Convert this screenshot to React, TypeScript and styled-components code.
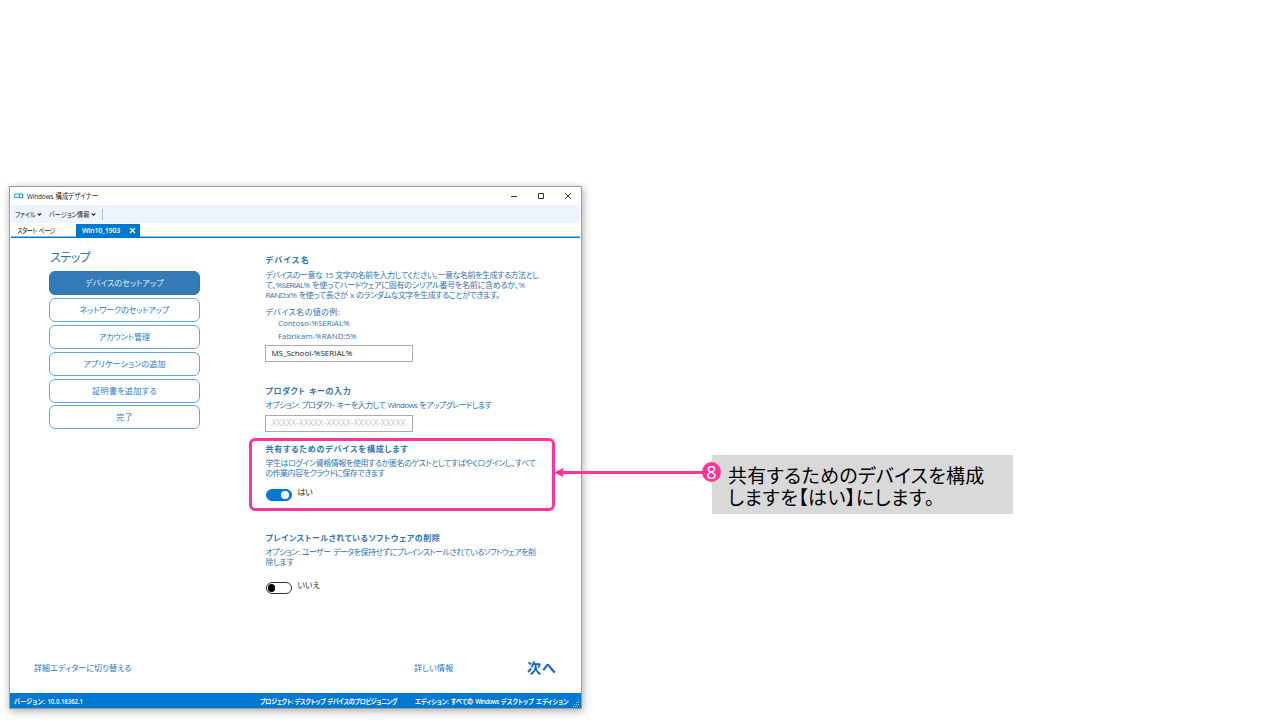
import React from 'react';
import styled, { createGlobalStyle, css } from 'styled-components';

const blue = '#2f74b5';
const pink = '#ff3399';

const GlobalStyle = createGlobalStyle`
  body { margin: 0; background: #fff; }
  * { box-sizing: border-box; }
`;

const Page = styled.main`
  position: relative;
  display: flex;
  align-items: flex-start;
  width: 1280px;
  height: 720px;
  overflow: hidden;
  font-family: 'Open Sans', 'Noto Sans CJK JP', sans-serif;
  font-feature-settings: 'palt';
`;

const Window = styled.section`
  display: flex;
  flex-direction: column;
  width: 573px;
  height: 523px;
  margin: 186px 0 0 9px;
  border: 1px solid #9b9d9e;
  background: #fff;
  box-shadow: 1px 2px 8px rgba(0, 0, 0, 0.34);
`;

const Text = styled.div<{ $w?: number; $size?: number; $h?: number; $mt?: number; $ml?: number; $track?: number; $bold?: boolean; $color?: string }>`
  flex: none;
  width: ${p => (p.$w ? `${p.$w}px` : 'auto')};
  height: ${p => p.$h ?? 10}px;
  margin-top: ${p => p.$mt ?? 0}px;
  margin-left: ${p => p.$ml ?? 0}px;
  font-size: ${p => p.$size ?? 8}px;
  line-height: ${p => p.$h ?? 10}px;
  letter-spacing: ${p => p.$track ?? -0.3}px;
  word-spacing: 0.8px;
  font-weight: ${p => (p.$bold ? 600 : 400)};
  color: ${p => p.$color ?? 'inherit'};
  white-space: nowrap;
  ${p => p.$w && css`text-align: justify; text-align-last: justify;`}
`;

const condense = 0.84;

const CondensedText = styled(Text)<{ $w: number }>`
  width: ${p => p.$w / condense}px;
  margin-right: ${p => p.$w - p.$w / condense}px;
  transform: scaleX(${condense});
  transform-origin: left center;
`;

const TitleBar = styled.header`
  display: flex;
  align-items: center;
  height: 18px;
  padding: 0 0 1px 4px;
  color: #222;
`;

const Controls = styled.div`
  display: flex;
  gap: 19px;
  margin-left: auto;
  padding-right: 9px;
  svg { display: block; }
`;

const MenuBar = styled.nav`
  display: flex;
  align-items: center;
  height: 18px;
  margin: 0 1px;
  padding-left: 4px;
  background: #edf4fe;
  color: #222;
`;

const Divider = styled.span`
  width: 1px;
  height: 11px;
  margin-left: 6px;
  background: #b7bcc4;
`;

const Tabs = styled.div`
  display: flex;
  align-items: flex-end;
  height: 15px;
  margin: 0 1px;
  padding-left: 6px;
  border-bottom: 1px solid #0078d0;
  box-shadow: 0 -1px 0 #7fbce8 inset;
  color: #222;
`;

const ActiveTab = styled.div`
  display: flex;
  align-items: center;
  justify-content: space-between;
  width: 64px;
  height: 13px;
  margin-left: 21px;
  padding: 0 4px 0 6px;
  background: #0078cf;
  color: #fff;
`;

const Body = styled.div`
  display: flex;
  flex: 1;
  color: ${blue};
`;

const Steps = styled.aside`
  display: flex;
  flex-direction: column;
  width: 151.4px;
  margin-left: 39px;
`;

const StepList = styled.div`
  display: flex;
  flex-direction: column;
  gap: 2.8px;
  margin-top: 5.4px;
`;

const Step = styled.div<{ $active?: boolean }>`
  display: flex;
  align-items: center;
  justify-content: center;
  height: 24px;
  padding-right: 1px;
  border: 1px solid ${p => (p.$active ? blue : '#64a3e4')};
  border-radius: 6px;
  background: ${p => (p.$active ? '#337ab7' : '#fff')};
  color: ${p => (p.$active ? '#e2effa' : '#207bd7')};
`;

const Form = styled.div`
  display: flex;
  flex-direction: column;
  width: 280px;
  margin-left: 65px;
`;

const Field = styled.div<{ $mt: number }>`
  display: flex;
  align-items: center;
  width: 147.5px;
  height: 17px;
  margin-top: ${p => p.$mt}px;
  padding: 0 0 1px 5px;
  border: 1px solid #aaa;
`;

const ToggleRow = styled.div<{ $mt: number }>`
  display: flex;
  align-items: flex-start;
  gap: 5.5px;
  height: 15px;
  margin-top: ${p => p.$mt}px;
`;

const Toggle = styled.span<{ $on?: boolean }>`
  display: flex;
  align-items: center;
  justify-content: ${p => (p.$on ? 'flex-end' : 'flex-start')};
  width: 26px;
  height: 12px;
  margin-top: 2px;
  margin-left: 0.6px;
  padding: 0 ${p => (p.$on ? 2 : 1)}px;
  border: 1px solid ${p => (p.$on ? '#0078d7' : '#333')};
  border-radius: 6px;
  background: ${p => (p.$on ? '#0078d7' : '#fff')};
  &::after {
    content: '';
    width: 7.5px;
    height: 7.5px;
    border-radius: 50%;
    background: ${p => (p.$on ? '#fff' : '#000')};
  }
`;

const Links = styled.footer`
  display: flex;
  align-items: center;
  height: 20px;
  margin-bottom: 15px;
  padding-left: 24px;
  color: #1a75d2;
`;

const StatusBar = styled.footer`
  display: flex;
  align-items: center;
  height: 15px;
  padding-left: 4px;
  background: #0078cf;
  color: #fff;
`;

const Grip = styled.svg`
  align-self: flex-end;
  margin: 0 1px 1px auto;
`;

const Callout = styled.aside`
  width: 301px;
  height: 59px;
  margin: 455px 0 0 130px;
  padding: 10px 0 0 16px;
  background: #d9d9d9;
  color: #000;
`;

const Highlight = styled.div`
  position: absolute;
  left: 249px;
  top: 438px;
  width: 306px;
  height: 73px;
  border: 3px solid ${pink};
  border-radius: 6px;
`;

const Arrow = styled.svg`
  position: absolute;
  left: 554px;
  top: 466px;
`;

const Badge = styled.div`
  position: absolute;
  left: 702px;
  top: 462px;
  width: 19px;
  height: 20px;
  border-radius: 50%;
  background: ${pink};
  color: #fff;
  font-size: 18px;
  line-height: 20px;
  text-align: center;
`;

const ChevronIcon = styled.svg`
  flex: none;
  margin-left: 2px;
`;

const Chevron = () => (
  <ChevronIcon width="5" height="5" viewBox="0 0 5 5">
    <path d="M.7 1.4 2.5 3.2 4.3 1.4" fill="none" stroke="#222" strokeWidth="1.1" />
  </ChevronIcon>
);

const steps: [string, number][] = [
  ['デバイスのセットアップ', 78],
  ['ネットワークのセットアップ', 89],
  ['アカウント管理', 51],
  ['アプリケーションの追加', 82],
  ['証明書を追加する', 64],
  ['完了', 16],
];

export default function App() {
  return (
    <Page>
      <GlobalStyle />
      <Window>
        <TitleBar>
          <svg width="10" height="8" viewBox="0 0 10 8" fill="none" stroke="#2697d8" strokeWidth="1">
            <path d="M4.5 5.5H.7V2h4" />
            <circle cx="6.9" cy="3.8" r="1.9" strokeWidth="1.3" />
          </svg>
          <CondensedText $w={71} $size={7.6} $ml={3} $track={-0.15}>Windows 構成デザイナー</CondensedText>
          <Controls>
            <svg width="8" height="8" viewBox="0 0 8 8"><path d="M1 4.5h6" stroke="#333" /></svg>
            <svg width="8" height="8" viewBox="0 0 8 8"><path d="M1.5 1.5h5v5h-5z" fill="none" stroke="#333" /></svg>
            <svg width="8" height="8" viewBox="0 0 8 8"><path d="m1 1 6 6m0-6-6 6" stroke="#333" /></svg>
          </Controls>
        </TitleBar>
        <MenuBar>
          <CondensedText $w={20} $size={7.2} $track={-0.5}>ファイル</CondensedText><Chevron />
          <CondensedText $w={40} $size={7.2} $ml={7} $track={-0.4}>バージョン情報</CondensedText><Chevron />
          <Divider />
        </MenuBar>
        <Tabs>
          <CondensedText $w={38} $size={7.2} $h={13} $track={-0.6}>スタート ページ</CondensedText>
          <ActiveTab>
            <Text $size={7} $track={-0.2} $bold>Win10_1903</Text>
            <svg width="7" height="7" viewBox="0 0 7 7"><path d="m1 1 5 5m0-5-5 5" stroke="#fff" strokeWidth="1.3" /></svg>
          </ActiveTab>
        </Tabs>
        <Body>
          <Steps>
            <Text $w={40} $size={12} $h={16} $mt={12} $ml={1} $track={-0.8}>ステップ</Text>
            <StepList>
              {steps.map(([label, width], i) => (
                <Step key={label} $active={i === 0}><Text $w={width}>{label}</Text></Step>
              ))}
            </StepList>
          </Steps>
          <Form>
            <Text $w={43} $mt={17} $bold>デバイス名</Text>
            <Text $w={273} $mt={5} $track={-0.6}>デバイスの一意な 15 文字の名前を入力してください。一意な名前を生成する方法とし</Text>
            <Text $w={259} $track={-0.6}>て、%SERIAL% を使ってハードウェアに固有のシリアル番号を名前に含めるか、%</Text>
            <Text $w={234} $track={-0.55}>RAND:x% を使って長さが x のランダムな文字を生成することができます。</Text>
            <Text $w={74} $mt={7}>デバイス名の値の例:</Text>
            <Text $ml={12.5} $mt={1} $track={-0.02}>Contoso-%SERIAL%</Text>
            <Text $ml={12.5} $mt={3} $track={-0.02}>Fabrikam-%RAND:5%</Text>
            <Field $mt={4}><Text $track={0} $color="#222">MS_School-%SERIAL%</Text></Field>
            <Text $w={85} $mt={24} $bold>プロダクト キーの入力</Text>
            <Text $w={226} $mt={4} $track={-0.65}>オプション: プロダクト キーを入力して Windows をアップグレードします</Text>
            <Field $mt={5}><Text $w={135} $size={8.5} $track={0.02} $color="#c8c8c8">XXXXX-XXXXX-XXXXX-XXXXX-XXXXX</Text></Field>
            <Text $w={142} $mt={12} $bold>共有するためのデバイスを構成します</Text>
            <Text $w={270} $mt={4} $track={-0.55}>学生はログイン資格情報を使用するか匿名のゲストとしてすばやくログインし、すべて</Text>
            <Text $w={119} $track={-0.5}>の作業内容をクラウドに保存できます</Text>
            <ToggleRow $mt={9}><Toggle $on /><Text $w={15} $color="#222">はい</Text></ToggleRow>
            <Text $w={174} $mt={31} $bold>プレインストールされているソフトウェアの削除</Text>
            <Text $w={270} $mt={4} $track={-0.65}>オプション: ユーザー データを保持せずにプレインストールされているソフトウェアを削</Text>
            <Text $w={28}>除します</Text>
            <ToggleRow $mt={13}><Toggle /><Text $w={22} $color="#222">いいえ</Text></ToggleRow>
          </Form>
        </Body>
        <Links>
          <Text $w={97}>詳細エディターに切り替える</Text>
          <Text $w={39} $ml={283}>詳しい情報</Text>
          <Text $w={28} $size={14} $h={20} $ml={74} $color="#0865ce" $bold>次へ</Text>
        </Links>
        <StatusBar>
          <CondensedText $w={69} $size={7.2} $track={-0.05} $bold>バージョン: 10.0.18362.1</CondensedText>
          <CondensedText $w={137} $size={7.2} $ml={177} $track={-0.65} $bold>プロジェクト: デスクトップ デバイスのプロビジョニング</CondensedText>
          <CondensedText $w={153} $size={7.2} $ml={18} $track={-0.55} $bold>エディション: すべての Windows デスクトップ エディション</CondensedText>
          <Grip width="7" height="7" viewBox="0 0 7 7" fill="#a9d2f0">
            <path d="M5 0h1v1H5zM3 2h1v1H3zM5 2h1v1H5zM1 4h1v1H1zM3 4h1v1H3zM5 4h1v1H5zM0 6h1v1H0zM2 6h1v1H2zM4 6h1v1H4z" />
          </Grip>
        </StatusBar>
      </Window>
      <Callout>
        <Text $w={256} $size={19} $h={22} $track={-0.3}>共有するためのデバイスを構成</Text>
        <Text $w={206} $size={19} $h={22} $track={-0.3}>しますを【はい】にします。</Text>
      </Callout>
      <Highlight />
      <Arrow width="150" height="12" viewBox="0 0 150 12" fill={pink}>
        <path d="M0 6.5 9 2v3h141v3H9v3z" />
      </Arrow>
      <Badge>8</Badge>
    </Page>
  );
}
